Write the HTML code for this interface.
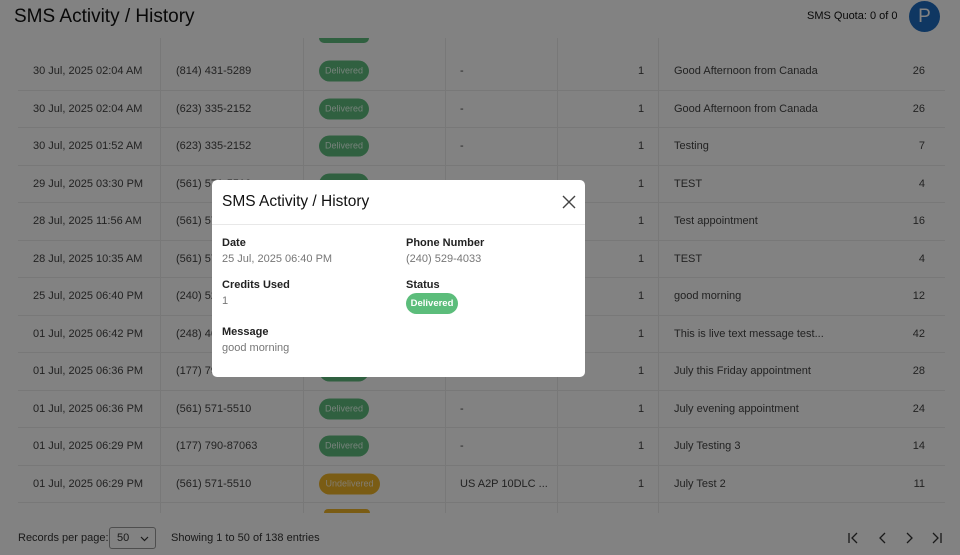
<!DOCTYPE html>
<html><head><meta charset="utf-8"><style>
*{box-sizing:border-box;margin:0;padding:0}
body{width:960px;height:555px;overflow:hidden;background:#fff;font-family:"Liberation Sans",Arial,sans-serif;position:relative;color:#222}
.top{position:absolute;left:0;top:0;width:960px;height:38px;background:#fff}
.top h1{position:absolute;left:14px;top:6px;font-size:19px;font-weight:normal;color:#111}
.quota{position:absolute;left:807px;top:10px;font-size:11px;color:#111}
.av{position:absolute;left:909px;top:1px;width:31px;height:31px;border-radius:50%;background:#1e6cc0;color:#fff;font-size:19px;text-align:center;line-height:31px}
.row{position:absolute;left:0;width:927px;height:37.5px;border-bottom:1px solid #ececec;font-size:11px;color:#444}
.row span{position:absolute;top:50%;transform:translateY(-50%);white-space:nowrap}
.vl{position:absolute;top:38px;height:475px;width:1px;background:#ececec}
.b{display:inline-block;width:50px;height:21px;line-height:21px;border-radius:11px;text-align:center;font-size:9px;color:#e8fff0;background:#5fbd7f}
.u{width:61px;background:#f0b429;color:#fff4d8}
.foot{position:absolute;left:0;top:515px;width:960px;height:40px;background:#fff;font-size:11px;color:#333}
.ov{position:absolute;left:0;top:0;width:960px;height:555px;background:rgba(0,0,0,.49);z-index:5}
.modal{position:absolute;left:212px;top:180px;width:373px;height:197px;background:#fff;border-radius:5px;z-index:6}
.modal h2{position:absolute;left:10px;top:13px;font-size:15.5px;font-weight:normal;color:#111}
.modal .hr{position:absolute;left:0;top:44px;width:373px;height:1px;background:#e8e8e8}
.l{position:absolute;font-size:11px;font-weight:bold;color:#222}
.v{position:absolute;font-size:11px;color:#777}
</style></head><body>
<div class="top"><h1>SMS Activity / History</h1><div class="quota">SMS Quota: 0 of 0</div><div class="av">P</div></div>
<div class="vl" style="left:160px"></div><div class="vl" style="left:303px"></div><div class="vl" style="left:445px"></div><div class="vl" style="left:557px"></div><div class="vl" style="left:658px"></div>
<div style="position:absolute;left:319px;top:38px;width:50px;height:5px;border-radius:0 0 10px 10px;background:#5fbd7f"></div>
<div id="rows"></div>
<div style="position:absolute;left:324px;top:509px;width:46px;height:4px;border-radius:4px 4px 0 0;background:#f0b429"></div>
<div class="foot">
<span style="position:absolute;left:18px;top:17px">Records per page:</span>
<div style="position:absolute;left:109px;top:12px;width:47px;height:22px;border:1px solid #999;border-radius:3px"><span style="position:absolute;left:7px;top:4px">50</span><svg style="position:absolute;left:30px;top:8px" width="9" height="6" fill="none" stroke="#333" stroke-width="1.2"><path d="M1 1l3.5 3.5L8 1"/></svg></div>
<span style="position:absolute;left:171px;top:17px">Showing 1 to 50 of 138 entries</span>
<svg style="position:absolute;left:845px;top:15px" width="100" height="16" fill="none" stroke="#333" stroke-width="1.3"><path d="M4 3v10M12 3l-5 5 5 5"/><path d="M40 3l-5 5 5 5"/><path d="M62 3l5 5-5 5"/><path d="M88 3l5 5-5 5M96 3v10"/></svg>
</div>
<div class="ov"></div>
<div class="modal">
<h2>SMS Activity / History</h2>
<svg style="position:absolute;left:350px;top:15px" width="14" height="14" stroke="#444" stroke-width="1.4"><path d="M1 1l12 12M13 1L1 13"/></svg>
<div class="hr"></div>
<div class="l" style="left:10px;top:57px">Date</div><div class="v" style="left:10px;top:73px">25 Jul, 2025 06:40 PM</div>
<div class="l" style="left:194px;top:57px">Phone Number</div><div class="v" style="left:194px;top:73px">(240) 529-4033</div>
<div class="l" style="left:10px;top:99px">Credits Used</div><div class="v" style="left:10px;top:115px">1</div>
<div class="l" style="left:194px;top:99px">Status</div>
<div style="position:absolute;left:194px;top:113px;width:52px;height:21px;line-height:21px;border-radius:11px;background:#5cbd7b;color:#fff;font-size:9.5px;font-weight:bold;text-align:center">Delivered</div>
<div class="l" style="left:10px;top:146px">Message</div><div class="v" style="left:10px;top:162px">good morning</div>
</div>
<script>
var d=[["30 Jul, 2025 02:04 AM","(814) 431-5289",0,"-","Good Afternoon from Canada",26],
["30 Jul, 2025 02:04 AM","(623) 335-2152",0,"-","Good Afternoon from Canada",26],
["30 Jul, 2025 01:52 AM","(623) 335-2152",0,"-","Testing",7],
["29 Jul, 2025 03:30 PM","(561) 571-5510",0,"-","TEST",4],
["28 Jul, 2025 11:56 AM","(561) 571-5510",0,"-","Test appointment",16],
["28 Jul, 2025 10:35 AM","(561) 571-5510",0,"-","TEST",4],
["25 Jul, 2025 06:40 PM","(240) 529-4033",0,"-","good morning",12],
["01 Jul, 2025 06:42 PM","(248) 464-2213",0,"-","This is live text message test...",42],
["01 Jul, 2025 06:36 PM","(177) 790-87063",0,"-","July this Friday appointment",28],
["01 Jul, 2025 06:36 PM","(561) 571-5510",0,"-","July evening appointment",24],
["01 Jul, 2025 06:29 PM","(177) 790-87063",0,"-","July Testing 3",14],
["01 Jul, 2025 06:29 PM","(561) 571-5510",1,"US A2P 10DLC ...","July Test 2",11]];
var h="";d.forEach(function(r,i){var t=53+i*37.5;
h+='<div class="row" style="left:18px;top:'+t+'px"><span style="left:15px">'+r[0]+'</span><span style="left:158px">'+r[1]+'</span><span style="left:301px"><i class="b'+(r[2]?' u':'')+'" style="font-style:normal">'+(r[2]?'Undelivered':'Delivered')+'</i></span><span style="left:442px">'+r[3]+'</span><span style="left:620px">1</span><span style="left:656px">'+r[4]+'</span><span style="right:20px">'+r[5]+'</span></div>';});
document.getElementById("rows").innerHTML=h;
</script>
</body></html>
